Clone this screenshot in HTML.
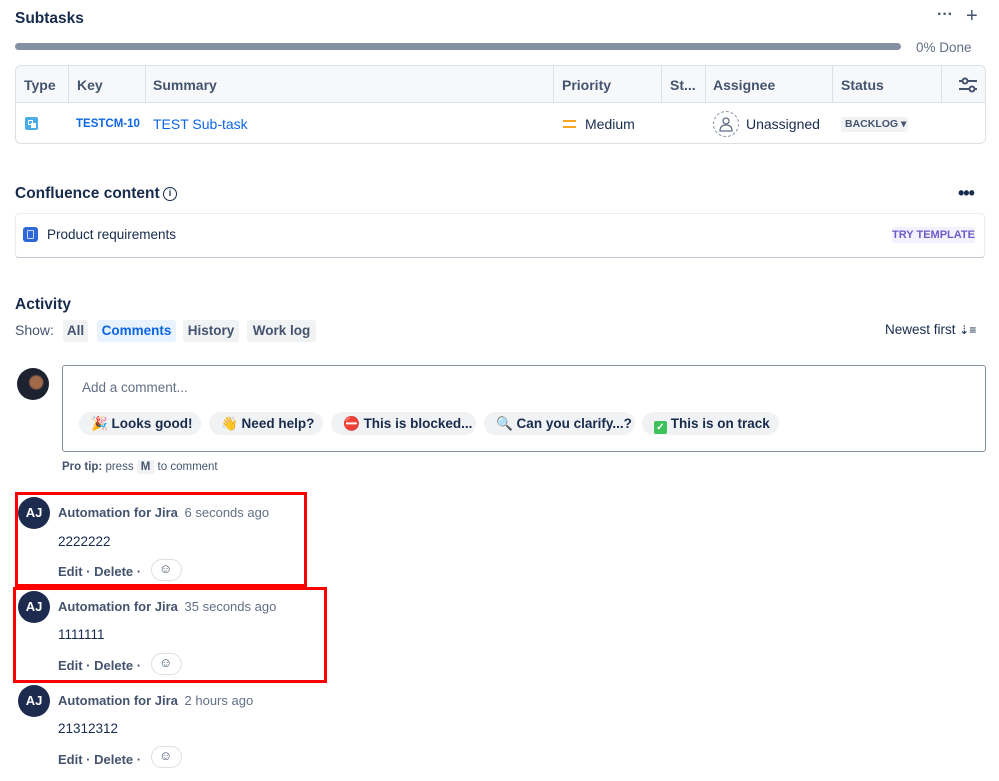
<!DOCTYPE html>
<html><head><meta charset="utf-8"><style>
*{margin:0;padding:0;box-sizing:border-box}
body{width:999px;height:781px;background:#fff;font-family:"Liberation Sans",sans-serif;color:#172b4d;position:relative;overflow:hidden;font-size:14px}
.a{position:absolute;white-space:nowrap}
.h{font-weight:bold;font-size:15.5px;color:#172b4d}
.th{color:#44546f;font-size:14px;font-weight:bold;top:77px}
.vl{position:absolute;top:66px;height:37px;width:1px;background:#dcdfe4}
.btn{position:absolute;top:320px;height:22px;background:#f1f2f4;border-radius:3px;font-weight:bold;color:#44546f;font-size:13.5px;line-height:22px;text-align:center}
.chip{position:absolute;top:412px;height:23px;background:#f1f2f4;border-radius:12px;font-size:13.5px;font-weight:bold;color:#172b4d;line-height:23px;padding-left:12px;white-space:nowrap;overflow:hidden}
.av{position:absolute;left:18px;width:32px;height:32px;border-radius:50%;background:#1d2b4f;color:#fff;font-weight:bold;font-size:13px;text-align:center;line-height:32px}
.nm{position:absolute;left:58px;font-weight:bold;color:#44546f;font-size:13px;white-space:nowrap}
.nm span{font-weight:normal;color:#626f86;margin-left:3px}
.tx{position:absolute;left:58px;font-size:13.5px;color:#172b4d}
.ed{position:absolute;left:58px;font-size:13px;font-weight:bold;color:#44546f;white-space:nowrap}
.emo{position:absolute;left:151px;width:31px;height:22px;border:1px solid #dcdfe4;border-radius:11px}
.red{position:absolute;border:3px solid #f00}
</style></head><body>
<div class="a h" style="left:15px;top:10px">Subtasks</div>
<div class="a" style="left:937px;top:6px;font-weight:bold;font-size:16px;color:#44546f">···</div>
<div class="a" style="left:966px;top:5px;font-size:20px;color:#44546f">+</div>
<div class="a" style="left:15px;top:43px;width:886px;height:7px;border-radius:4px;background:#8590a2"></div>
<div class="a" style="left:916px;top:40px;color:#626f86;font-size:13.5px">0% Done</div>

<div class="a" style="left:15px;top:65px;width:971px;height:79px;border:1px solid #dcdfe4;border-radius:6px"></div>
<div class="a" style="left:16px;top:66px;width:969px;height:37px;background:#f7f8f9;border-bottom:1px solid #dcdfe4;border-radius:5px 5px 0 0"></div>
<div class="vl" style="left:68px"></div><div class="vl" style="left:145px"></div><div class="vl" style="left:553px"></div><div class="vl" style="left:661px"></div><div class="vl" style="left:705px"></div><div class="vl" style="left:832px"></div><div class="vl" style="left:941px"></div>
<div class="a th" style="left:24px">Type</div>
<div class="a th" style="left:77px">Key</div>
<div class="a th" style="left:153px">Summary</div>
<div class="a th" style="left:562px">Priority</div>
<div class="a th" style="left:670px">St...</div>
<div class="a th" style="left:713px">Assignee</div>
<div class="a th" style="left:841px">Status</div>
<svg class="a" style="left:958px;top:77px" width="20" height="16" viewBox="0 0 20 16"><g stroke="#44546f" stroke-width="2" fill="#fff"><line x1="1" y1="4" x2="19" y2="4"/><line x1="1" y1="12" x2="19" y2="12"/><circle cx="7" cy="4" r="2.5"/><circle cx="14" cy="12" r="2.5"/></g></svg>
<div class="a" style="left:25px;top:117px;width:13px;height:13px;background:#4bade8;border-radius:2px"><div style="position:absolute;left:3px;top:3px;width:5px;height:5px;border:1.5px solid #fff"></div><div style="position:absolute;left:6px;top:6px;width:5px;height:5px;background:#fff"></div></div>
<div class="a" style="left:76px;top:118px;font-size:11.5px;font-weight:bold;color:#0c66e4">TESTCM-10</div>
<div class="a" style="left:153px;top:116px;font-size:14px;color:#0c66e4">TEST Sub-task</div>
<div class="a" style="left:563px;top:120px;width:13px;height:2px;background:#f5a623"></div>
<div class="a" style="left:563px;top:126px;width:13px;height:2px;background:#f5a623"></div>
<div class="a" style="left:585px;top:116px">Medium</div>
<div class="a" style="left:713px;top:111px;width:26px;height:26px;border:1px dashed #8590a2;border-radius:50%"></div>
<svg class="a" style="left:717px;top:114px" width="18" height="20" viewBox="0 0 18 20"><circle cx="9" cy="7" r="3" fill="none" stroke="#626f86" stroke-width="1.3"/><path d="M3 17 Q3 11 9 11 Q15 11 15 17 Z" fill="none" stroke="#626f86" stroke-width="1.3"/></svg>
<div class="a" style="left:746px;top:116px">Unassigned</div>
<div class="a" style="left:841px;top:117px;width:67px;height:15px;background:#f1f2f4;border-radius:3px;font-size:10.5px;font-weight:bold;color:#44546f;line-height:15px;padding-left:4px">BACKLOG ▾</div>

<div class="a h" style="left:15px;top:185px">Confluence content</div>
<div class="a" style="left:163px;top:187px;width:14px;height:14px;border:1.8px solid #172b4d;border-radius:50%;font-size:9px;font-weight:bold;text-align:center;line-height:11px">i</div>
<div class="a" style="left:958px;top:183px;font-weight:bold;font-size:18px;color:#172b4d;letter-spacing:-1px">•••</div>
<div class="a" style="left:15px;top:213px;width:970px;height:45px;border:1px solid #ebecf0;border-bottom:1px solid #c1c7d0;border-radius:4px"></div>
<div class="a" style="left:23px;top:227px;width:15px;height:15px;background:#2f66d8;border-radius:3px"><div style="position:absolute;left:4px;top:3px;width:7px;height:9px;border:1.3px solid #c9d8f7;border-radius:1px"></div></div>
<div class="a" style="left:47px;top:227px;font-size:13.5px">Product requirements</div>
<div class="a" style="left:892px;top:227px;width:83px;height:16px;background:#f3f0ff;border-radius:3px;color:#6e5dc6;font-size:11px;font-weight:bold;line-height:16px;text-align:center">TRY TEMPLATE</div>

<div class="a h" style="left:15px;top:296px">Activity</div>
<div class="a" style="left:15px;top:322px;color:#44546f">Show:</div>
<div class="btn" style="left:63px;width:25px">All</div>
<div class="btn" style="left:97px;width:79px;background:#e9f2ff;color:#0c66e4">Comments</div>
<div class="btn" style="left:183px;width:56px">History</div>
<div class="btn" style="left:247px;width:69px">Work log</div>
<div class="a" style="left:885px;top:322px;font-size:13.5px">Newest first <span style="font-size:12px">⇣≡</span></div>

<div class="a" style="left:17px;top:368px;width:32px;height:32px;border-radius:50%;background:radial-gradient(circle at 60% 45%,#a06a4a 0 6px,#1c2230 8px)"></div>
<div class="a" style="left:62px;top:365px;width:924px;height:87px;border:1px solid #8590a2;border-radius:3px"></div>
<div class="a" style="left:82px;top:380px;color:#626f86;font-size:13.5px">Add a comment...</div>
<div class="chip" style="left:79px;width:122px">🎉 Looks good!</div>
<div class="chip" style="left:209px;width:114px">👋 Need help?</div>
<div class="chip" style="left:331px;width:145px"><span style="color:#e2483d">⛔</span> This is blocked...</div>
<div class="chip" style="left:484px;width:151px">🔍 Can you clarify...?</div>
<div class="chip" style="left:642px;width:137px"><span style="display:inline-block;width:13px;height:13px;background:#3ec05a;border-radius:2px;color:#fff;font-size:10px;line-height:13px;text-align:center;vertical-align:-2px">✓</span> This is on track</div>
<div class="a" style="left:62px;top:461px;font-size:11.5px;color:#44546f"><b>Pro tip:</b> press <span style="background:#f1f2f4;padding:1px 4px;font-weight:bold">M</span> to comment</div>

<div class="red" style="left:15px;top:492px;width:292px;height:95px"></div>
<div class="red" style="left:13px;top:587px;width:314px;height:96px"></div>

<div class="av" style="top:497px">AJ</div>
<div class="nm" style="top:505px">Automation for Jira <span>6 seconds ago</span></div>
<div class="tx" style="top:534px">2222222</div>
<div class="ed" style="top:564px">Edit · Delete ·</div>
<div class="emo" style="top:559px"></div><div class="a" style="left:159px;top:561px;font-size:13px;color:#44546f">☺</div>

<div class="av" style="top:591px">AJ</div>
<div class="nm" style="top:599px">Automation for Jira <span>35 seconds ago</span></div>
<div class="tx" style="top:627px">1111111</div>
<div class="ed" style="top:658px">Edit · Delete ·</div>
<div class="emo" style="top:653px"></div><div class="a" style="left:159px;top:655px;font-size:13px;color:#44546f">☺</div>

<div class="av" style="top:685px">AJ</div>
<div class="nm" style="top:693px">Automation for Jira <span>2 hours ago</span></div>
<div class="tx" style="top:721px">21312312</div>
<div class="ed" style="top:752px">Edit · Delete ·</div>
<div class="emo" style="top:746px"></div><div class="a" style="left:159px;top:748px;font-size:13px;color:#44546f">☺</div>
</body></html>
